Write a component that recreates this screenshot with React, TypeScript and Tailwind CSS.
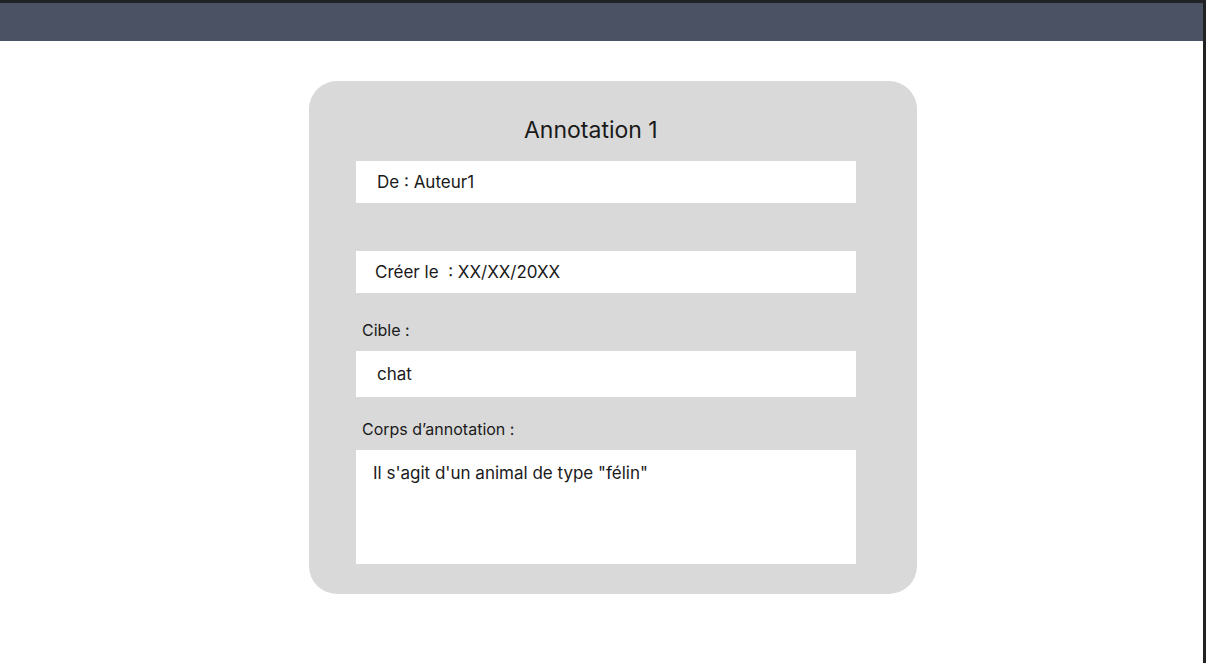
export default function App() {
  return (
    <div className="h-[663px] w-[1206px] bg-white border-r-[3px] border-[#202224] font-['Inter',sans-serif] text-[#1a1a1a] overflow-hidden">
      <header className="h-[41px] bg-[#4b5263] border-t-[3px] border-[#202224]" />

      <main className="pt-[40px]">
        <section className="ml-[309px] w-[608px] h-[513px] rounded-[28px] bg-[#d9d9d9] pl-[47px] pt-[33px]">
          <h1 className="ml-[168px] h-[32px] text-[23px] leading-[32px]">Annotation 1</h1>

          <div className="mt-[15px] w-[500px] h-[42px] bg-white pl-[21px] text-[17px] leading-[42px]">
            De : Auteur1
          </div>

          <div className="mt-[48px] w-[500px] h-[42px] bg-white pl-[19px] text-[17px] leading-[42px]">
            Créer le&nbsp; : XX/XX/20XX
          </div>

          <p className="mt-[20px] pl-[6px] h-[34px] text-[16px] leading-[34px]">Cible :</p>

          <div className="mt-[4px] w-[500px] h-[46px] bg-white pl-[21px] text-[17px] leading-[46px]">
            chat
          </div>

          <p className="mt-[16px] pl-[6px] h-[32px] text-[16px] leading-[32px]">Corps d’annotation :</p>

          <div className="mt-[5px] w-[500px] h-[114px] bg-white pl-[17px] pt-[10px] text-[17px] leading-[26px]">
            Il s'agit d'un animal de type "félin"
          </div>
        </section>
      </main>
    </div>
  );
}
